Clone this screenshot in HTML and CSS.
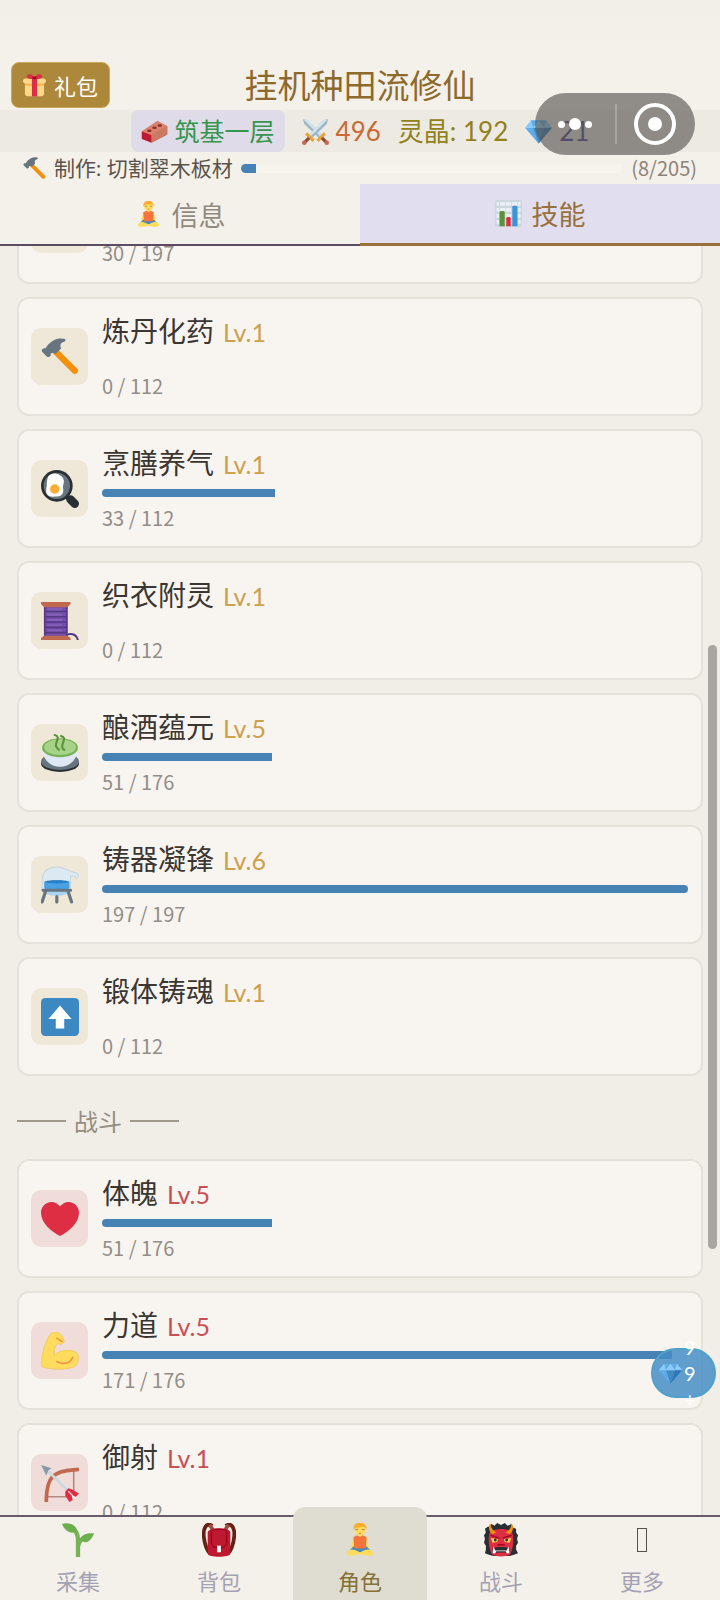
FILE: index.html
```html
<!DOCTYPE html>
<html lang="zh-CN">
<head>
    <meta charset="UTF-8">
    <meta name="viewport" content="width=device-width, initial-scale=1">
    <title>挂机种田流修仙</title>
    <link rel="stylesheet" href="styles.css">
</head>
<body>
<!-- 图标 -->
<svg class="defs" aria-hidden="true">
    <symbol id="gift" viewBox="0 0 36 36">
        <path fill="#FDD888" d="M33 31c0 2.200-1.800 4-4 4H7c-2.200 0-4-1.800-4-4V14h30v17z"/>
        <path fill="#FCAB40" d="M3 15h30v3H3z"/>
        <path fill="#FDD888" d="M36 11c0 2.200-1.800 4-4 4H4c-2.200 0-4-1.800-4-4s1.800-4 4-4h28c2.200 0 4 1.800 4 4z"/>
        <path fill="#DA2F47" d="M14 7h8v28h-8z"/>
        <path fill="#DA2F47" d="M18 8C14 8 6 8 6 4s6-5 9-2l3 4 3-4c3-3 9-2 9 2s-8 4-12 4z"/>
        <path fill="#A0041E" d="M15 4h6v4h-6z"/>
    </symbol>
    <symbol id="brick" viewBox="0 0 36 36">
        <path fill="#C1694F" d="M1 18 22 4l13 7v11L14 33z"/>
        <path fill="#D98270" d="M1 18 22 4l13 7-21 12z"/>
        <path fill="#BE1931" d="m1 18 13 5v10L1 28z"/>
        <path fill="#C97A62" d="M14 23 35 11v11L14 33z"/>
        <g fill="#8A2E2A"><ellipse cx="11" cy="17" rx="3" ry="1.800"/><ellipse cx="18" cy="13" rx="3" ry="1.800"/><ellipse cx="25" cy="10" rx="3" ry="1.800"/></g>
    </symbol>
    <symbol id="swords" viewBox="0 0 36 36">
        <g id="sword">
            <path fill="#9FB6C4" d="M1 1l7 2 20 21-4 4L3 8z"/>
            <path fill="#D5E5EF" d="M1 1l7 2 20 21-2 2z"/>
            <path fill="#E8A33A" d="m19 29 10-10 3 3-10 10z"/>
            <path fill="#8A4B38" d="m25 28 3-3 6 6-3 3z"/>
            <circle cx="33" cy="33" r="3" fill="#C1694F"/>
        </g>
        <use href="#sword" transform="matrix(-1 0 0 1 36 0)"/>
    </symbol>
    <symbol id="gem" viewBox="0 0 36 36">
        <path fill="#BDDDF4" d="M8 3h20l8 10H0z"/>
        <path fill="#5DADEC" d="M0 13h36L18 34z"/>
        <path fill="#8CCAF7" d="m0 13 8-10 5 10zM28 3l-5 10h13z"/>
        <path fill="#4289C1" d="M11 13 18 34l7-21z"/>
        <path fill="#5DADEC" d="m8 3 10 0-7 10zM18 3h10l-3 10z"/>
        <path fill="#8CCAF7" d="m18 3 7 10H11z"/>
        <path fill="#2E76B5" d="M25 13h11L18 34z"/>
    </symbol>
    <symbol id="hammer" viewBox="0 0 36 36">
        <path stroke="#F4900C" stroke-width="6" stroke-linecap="round" d="m14 13 18 18"/>
        <path fill="#66757F" d="M23 1C16-1 11 2 7 6l-3 4c-2-1-4 1-3 3l5 5c2 0 4-1 3-3l2-1 3 1 5-5c-2-5 1-6 4-7z"/>
    </symbol>
    <symbol id="yoga" viewBox="0 0 36 36">
        <path fill="#FFDC5D" d="M11 15h14l3 13-2 1-4-9h-8l-4 9-2-1zM15 11h6v5h-6z"/>
        <path fill="#4289C1" d="M11 25h14l5 5c-4 3-20 3-24 0z"/>
        <path fill="#FFDC5D" d="M4 31c4-5 8-3 14 0 6-3 10-5 14 0 1 4-5 4-9 3l-5-1-5 1c-4 1-10 1-9-3z"/>
        <path fill="#F4743B" d="M11 15l4-2c2 2 4 2 6 0l4 2-1 12H12z"/>
        <circle cx="18" cy="7" r="6" fill="#FFDC5D"/>
        <path fill="#FFAC33" d="M11 7C10-3 26-3 25 7c-1-2-3-3-4-3-3 1-8 0-10 3z"/>
        <path fill="none" stroke="#C1694F" d="M13 7h3M20 7h3M17 11h2"/>
    </symbol>
    <symbol id="chart" viewBox="0 0 36 36">
        <rect width="36" height="36" rx="3" fill="#CCD6DD"/>
        <path fill="none" stroke="#E9F1F6" stroke-width="5" d="M2 5h32M2 13h32M2 21h32M2 29h32"/>
        <path stroke="#CCD6DD" stroke-width="1" d="M6 1v34M14 1v34M22 1v34M30 1v34"/>
        <path fill="#5C913B" d="M6 16c0-2 7-2 7 0v19H6z"/>
        <path fill="#DD2E44" d="M15 24c0-2 6-2 6 0v11h-6z"/>
        <path fill="#3B94D9" d="M23 9c0-2 7-2 7 0v26h-7z"/>
    </symbol>
    <symbol id="pan" viewBox="0 0 36 36">
        <path stroke="#292F33" stroke-width="4" d="m23 24 6 6"/>
        <path stroke="#292F33" stroke-width="8" stroke-linecap="round" d="m28 28 4 4"/>
        <circle cx="15" cy="15" r="15" fill="#292F33"/>
        <circle cx="15" cy="15" r="12.500" fill="#66757F"/>
        <path fill="#fff" d="M7 6c4-5 12-2 14 2 2 4-1 6 0 10 1 5-3 8-8 7-5 1-9-1-8-7 1-5 0-8 2-12z"/>
        <circle cx="13" cy="18" r="4.500" fill="#FFAC33"/>
    </symbol>
    <symbol id="thread" viewBox="0 0 36 36">
        <path fill="none" stroke="#553986" stroke-width="2" d="M24 31c7-2 10 1 11 5"/>
        <path fill="#744EAA" d="M3 3h22v30H3z"/>
        <path stroke="#8460B8" stroke-width="2" d="M6 7h14M6 12h14M6 17h14M6 22h14M6 27h14"/>
        <path stroke="#553986" stroke-width="1.500" d="M3 9h22M3 14h22M3 19h22M3 24h22M3 29h22M3.500 4v28M24.500 4v28"/>
        <path fill="#C1694F" d="M0 0h28v2l-3 3H3L0 2zM3 32h22l3 2v2H0v-2z"/>
    </symbol>
    <symbol id="tea" viewBox="0 0 36 36">
        <ellipse cx="18" cy="28" rx="18" ry="8" fill="#292F33"/>
        <ellipse cx="18" cy="26" rx="18" ry="8" fill="#66757F"/>
        <path fill="#E1E8F5" d="M1 13h34c0 9-6 18-17 18S1 22 1 13z"/>
        <ellipse cx="18" cy="13" rx="17" ry="9" fill="#77B255"/>
        <ellipse cx="18" cy="12.500" rx="15" ry="7.500" fill="#A6D388"/>
        <path fill="none" stroke="#5C913B" stroke-width="2" stroke-linecap="round" d="M13 1c4 1 3 3 2 6s-2 5 2 8M19 2c4 1 3 3 2 6s-2 5 1 7"/>
    </symbol>
    <symbol id="alembic" viewBox="0 0 36 36">
        <path fill="#DCE9F2" stroke="#C6D5E0" d="M1 23V15C1 4 8 1 15 1c7 0 11 4 16 5 4 0 5 3 4 5l-2 1c0-3-3-3-5-2v13c-2 6-25 6-27 0z"/>
        <ellipse cx="15" cy="25" rx="10" ry="3" fill="#A9D3F2"/>
        <path fill="#4BA0E4" d="M3 15c4-2 20-2 24 0v6c-4 3-20 3-24 0z"/>
        <path fill="#2A7FC4" d="M3 15c4-2 20-2 24 0-4 2-20 2-24 0z"/>
        <path fill="none" stroke="#66757F" stroke-width="3" stroke-linecap="round" d="M2 23h26M4 25 1 34M26 25l3 9M15 29v5"/>
    </symbol>
    <symbol id="up" viewBox="0 0 36 36">
        <rect width="36" height="36" rx="4" fill="#3B88C3"/>
        <path fill="#fff" d="M18 7 29 20h-7v9h-8v-9H7z"/>
    </symbol>
    <symbol id="heart" viewBox="0 0 36 36">
        <path fill="#DD2E44" d="M36 12c0-5-4-10-10-10-3 0-6 2-8 4-2-2-5-4-8-4C4 2 0 7 0 12c0 10 10 18 18 22 8-4 18-12 18-22z"/>
    </symbol>
    <symbol id="arm" viewBox="0 0 36 36">
        <path fill="#FFDC5D" stroke="#E9BD38" stroke-width=".5" d="M15 0c3 1 6 4 7 9-2 3-4 3-6 2-3 2-4 7-3 11 4-5 14-6 20-3 4 3 3 12-2 14-5 3-22 3-30 0-2-8 3-25 8-31 2-1 4-2 6-2z"/>
        <path fill="none" stroke="#EF9645" stroke-width="1.500" stroke-linecap="round" d="M15 6c2 0 3 3 5 3M15 28c7 4 13 1 15-4"/>
    </symbol>
    <symbol id="bow" viewBox="0 0 36 36">
        <path fill="none" stroke="#B58A7C" stroke-width="1.500" d="M5 31h24M31 29V5"/>
        <path fill="none" stroke="#C1694F" stroke-width="3.500" d="M5 36c0-6 0-19 7-25S30 6 36 5"/>
        <path stroke="#CCD6DD" stroke-width="2.500" d="m5 5 23 23"/>
        <path fill="#8899A6" d="m0 1 10 3-3 2-2 5z"/>
        <path fill="#DD2E44" d="m23 26 3-3 3 1 7 4-3 3-4-1 1 4-3 2-4-6z"/>
        <path stroke="#fff" d="m26 26 7 7"/>
    </symbol>
    <symbol id="sprout" viewBox="0 0 36 36">
        <path fill="none" stroke="#77B255" stroke-width="4.500" d="M18 36V18c0-8-4-12-9-14M18 25c1-6 4-9 9-11"/>
        <path fill="#6DAF4E" d="M1 1c8-2 15 1 16 7-5 5-13 1-16-7zM35 11c-6-1-12 1-14 5 0 5 9 8 14-5z"/>
    </symbol>
    <symbol id="bag" viewBox="0 0 36 36">
        <path fill="none" stroke="#662113" stroke-width="4" d="M11 3C4-1 1 6 2 15s3 14 7 18M25 3c7-4 10 3 9 12s-3 14-7 18"/>
        <path stroke="#A0513D" stroke-width="4" d="m8 2 4 6M28 2l-4 6"/>
        <path fill="#BE1931" d="M6 10c0-6 24-6 24 0v22c0 5-24 5-24 0z"/>
        <path fill="none" stroke="#A0041E" stroke-width="1.500" d="M10 9c0-3 16-3 16 0v12c0 7-16 7-16 0z"/>
        <path fill="#BE1931" d="M8 27h20v6H8z"/>
        <path fill="#fff" d="M16 24h4v7h-4z"/>
    </symbol>
    <symbol id="ogre" viewBox="0 0 36 36">
        <path fill="#292F33" d="m5 4 3-3 3 2 3-3 4 2 4-2 3 3 4-2 2 4 3 1v4l2 3-1 4 1 4-2 3v4l2 4-5 2-4 1H10l-4-1-5-2 1-4v-4l-2-3 1-4-1-4 2-3-1-4 3-2z"/>
        <path fill="#DD2E44" d="M6 10c5-5 19-5 24 0 2 7 1 18-3 24-5 2-13 2-18 0C5 28 4 17 6 10z"/>
        <path fill="#F4900C" d="M7 0c0 6 3 8 6 10l-4 2C5 9 4 4 7 0zM29 0c0 6-3 8-6 10l4 2c4-3 5-8 2-12z"/>
        <path fill="#FFCC4D" d="m7 16 8 1-1 3-5 1zM29 16l-8 1 1 3 5 1z"/>
        <circle cx="12" cy="18" r="1.500" fill="#292F33"/><circle cx="24" cy="18" r="1.500" fill="#292F33"/>
        <path fill="none" stroke="#A0041E" stroke-width="1.500" d="m7 13 9 3M29 13l-9 3M14 23h8"/>
        <path fill="#292F33" d="M9 27c4-2 14-2 18 0v5c-4-1-14-1-18 0z"/>
        <path fill="#fff" d="m10 25 2 4h12l2-4 1 7h-3l-1-2H13l-1 2H9z"/>
    </symbol>
</svg>

<div class="app">
    <header class="header">
        <div class="title-row">
            <button class="gift-btn" type="button"><svg class="icon-sm"><use href="#gift"/></svg>礼包</button>
            <h1>挂机种田流修仙</h1>
        </div>
        <div class="status">
            <span class="realm"><svg class="icon-md"><use href="#brick"/></svg>筑基一层</span>
            <span class="stat power"><svg class="icon-md"><use href="#swords"/></svg>496</span>
            <span class="stat stone">灵晶: 192</span>
            <span class="stat jade"><svg class="icon-md"><use href="#gem"/></svg>21</span>
        </div>
        <div class="craft">
            <svg class="icon-sm"><use href="#hammer"/></svg>
            <span class="craft-name">制作: 切割翠木板材</span>
            <div class="craft-bar"><div class="fill" style="width: 3.9%"></div></div>
            <span class="craft-num">(8/205)</span>
        </div>
        <div class="capsule">
            <button class="dots" type="button" aria-label="菜单"><i></i><i class="big"></i><i></i></button>
            <button class="target" type="button" aria-label="关闭"><i></i></button>
        </div>
    </header>

    <nav class="tabs">
        <button class="tab" type="button"><svg class="icon-md"><use href="#yoga"/></svg>信息</button>
        <button class="tab active" type="button"><svg class="icon-md"><use href="#chart"/></svg>技能</button>
    </nav>

    <main class="content">
        <div class="list">
            <div class="card cut">
                <div class="tile"></div>
                <div class="info">
                    <p>30 / 197</p>
                </div>
            </div>
            <div class="card">
                <div class="tile"><svg><use href="#hammer"/></svg></div>
                <div class="info">
                    <h2>炼丹化药 <span class="lv">Lv.1</span></h2>
                    <div class="bar"></div>
                    <p>0 / 112</p>
                </div>
            </div>
            <div class="card">
                <div class="tile"><svg><use href="#pan"/></svg></div>
                <div class="info">
                    <h2>烹膳养气 <span class="lv">Lv.1</span></h2>
                    <div class="bar"><div class="fill" style="width: 29.5%"></div></div>
                    <p>33 / 112</p>
                </div>
            </div>
            <div class="card">
                <div class="tile"><svg><use href="#thread"/></svg></div>
                <div class="info">
                    <h2>织衣附灵 <span class="lv">Lv.1</span></h2>
                    <div class="bar"></div>
                    <p>0 / 112</p>
                </div>
            </div>
            <div class="card">
                <div class="tile"><svg><use href="#tea"/></svg></div>
                <div class="info">
                    <h2>酿酒蕴元 <span class="lv">Lv.5</span></h2>
                    <div class="bar"><div class="fill" style="width: 29%"></div></div>
                    <p>51 / 176</p>
                </div>
            </div>
            <div class="card">
                <div class="tile"><svg><use href="#alembic"/></svg></div>
                <div class="info">
                    <h2>铸器凝锋 <span class="lv">Lv.6</span></h2>
                    <div class="bar"><div class="fill" style="width: 100%"></div></div>
                    <p>197 / 197</p>
                </div>
            </div>
            <div class="card">
                <div class="tile"><svg><use href="#up"/></svg></div>
                <div class="info">
                    <h2>锻体铸魂 <span class="lv">Lv.1</span></h2>
                    <div class="bar"></div>
                    <p>0 / 112</p>
                </div>
            </div>

            <div class="group">战斗</div>

            <div class="card fight">
                <div class="tile"><svg><use href="#heart"/></svg></div>
                <div class="info">
                    <h2>体魄 <span class="lv">Lv.5</span></h2>
                    <div class="bar"><div class="fill" style="width: 29%"></div></div>
                    <p>51 / 176</p>
                </div>
            </div>
            <div class="card fight">
                <div class="tile"><svg><use href="#arm"/></svg></div>
                <div class="info">
                    <h2>力道 <span class="lv">Lv.5</span></h2>
                    <div class="bar"><div class="fill" style="width: 97.2%"></div></div>
                    <p>171 / 176</p>
                </div>
            </div>
            <div class="card fight">
                <div class="tile"><svg><use href="#bow"/></svg></div>
                <div class="info">
                    <h2>御射 <span class="lv">Lv.1</span></h2>
                    <div class="bar"></div>
                    <p>0 / 112</p>
                </div>
            </div>
        </div>
        <div class="scrollbar"></div>
        <button class="float-gem" type="button"><svg class="icon-sm"><use href="#gem"/></svg><span>9<br>9<br>+</span></button>
    </main>

    <nav class="bottom">
        <a href="#"><svg><use href="#sprout"/></svg>采集</a>
        <a href="#"><svg><use href="#bag"/></svg>背包</a>
        <a href="#" class="active"><svg><use href="#yoga"/></svg>角色</a>
        <a href="#"><svg><use href="#ogre"/></svg>战斗</a>
        <a href="#"><i class="blank"></i>更多</a>
    </nav>
</div>
</body>
</html>
```
FILE: styles.css
```css
* {
    box-sizing: border-box;
    margin: 0;
    padding: 0;
}

body {
    background: #f1eee7;
    color: #3b3632;
    font-family: Lato, "Noto Sans CJK SC", sans-serif;
}

button {
    border: none;
    background: none;
    font: inherit;
}

.defs {
    position: absolute;
    width: 0;
    height: 0;
}

.icon-sm {
    width: 23px;
    height: 23px;
    flex: none;
}

.icon-md {
    width: 27px;
    height: 27px;
    flex: none;
}

.app {
    display: flex;
    flex-direction: column;
    height: 100vh;
}

/* 顶部 */
.header {
    position: relative;
    padding-top: 60px;
    background: linear-gradient(#f2efe8, #f4f1ea 60px);
}

.title-row {
    display: grid;
    grid-template-columns: 1fr auto 1fr;
    align-items: center;
    padding: 0 11px;
    height: 50px;
}

.gift-btn {
    display: flex;
    align-items: center;
    justify-content: center;
    justify-self: start;
    gap: 8px;
    width: 99px;
    height: 46px;
    border: 1px solid #c9a85a;
    border-radius: 8px;
    background: #ad883b;
    color: #fff;
    font-size: 22px;
}

h1 {
    color: #8d6a2c;
    font-size: 33px;
    font-weight: 400;
    line-height: 46px;
}

.status {
    display: flex;
    align-items: center;
    justify-content: center;
    height: 42px;
    gap: 17px;
    background: #edeae3;
    font-size: 25px;
    line-height: 42px;
}

.realm,
.stat {
    display: flex;
    align-items: center;
    gap: 7px;
}

.realm {
    padding: 0 10px;
    border-radius: 8px;
    background: #e0dbe8;
    color: #35964d;
}

.stat {
    font-size: 26px;
}

.power {
    color: #cb6a33;
}

.stone {
    color: #928019;
}

.jade {
    color: #4b3a90;
}

.craft {
    display: flex;
    align-items: center;
    height: 32px;
    padding: 0 23px;
    gap: 8px;
    font-size: 21px;
    line-height: 30px;
    color: #5b534b;
}

.craft-bar {
    flex: 1;
    height: 9px;
    border-radius: 5px;
    overflow: hidden;
    background: #f7f4ee;
}

.craft-num {
    color: #8d8378;
    font-family: "Noto Sans CJK SC", sans-serif;
    font-size: 20px;
}

.fill {
    height: 100%;
    background: #4682b4;
}

.capsule {
    position: absolute;
    top: 93px;
    right: 25px;
    display: flex;
    width: 160px;
    height: 62px;
    border-radius: 31px;
    background: rgba(90, 88, 84, .65);
}

.capsule button {
    flex: 1;
    display: flex;
    align-items: center;
    justify-content: center;
    gap: 4px;
}

.capsule i {
    width: 7px;
    height: 7px;
    border-radius: 50%;
    background: #fff;
}

.capsule .big {
    width: 12px;
    height: 12px;
}

.capsule .target::before {
    content: "";
    position: absolute;
    width: 34px;
    height: 34px;
    border: 4px solid #fff;
    border-radius: 50%;
}

.capsule .target i {
    width: 14px;
    height: 14px;
}

.capsule::after {
    content: "";
    position: absolute;
    left: 50%;
    top: 11px;
    width: 2px;
    height: 40px;
    background: #a8a6a2;
}

/* 标签页 */
.tabs {
    display: flex;
    background: #f4f1ea;
}

.tab {
    flex: 1;
    display: flex;
    align-items: center;
    justify-content: center;
    gap: 10px;
    height: 62px;
    border-bottom: 2px solid #5a4c62;
    color: #92897f;
    font-size: 27px;
}

.tab.active {
    border-bottom: 3px solid #987038;
    background: #e1deef;
    color: #98713c;
}

/* 技能列表 */
.content {
    position: relative;
    flex: 1;
    min-height: 0;
}

.list {
    display: flex;
    flex-direction: column;
    justify-content: flex-end;
    gap: 13px;
    height: 100%;
    padding: 0 17px;
    overflow: hidden;
}

.card {
    display: flex;
    align-items: center;
    flex: none;
    gap: 14px;
    height: 119px;
    padding: 14px 13px 14px 12px;
    border: 2px solid #e5e2dc;
    border-radius: 12px;
    background: #f8f5f0;
}

.card:last-child {
    margin-bottom: -27px;
}

.cut .info {
    align-self: flex-end;
}

.tile {
    display: flex;
    align-items: center;
    justify-content: center;
    flex: none;
    width: 57px;
    height: 57px;
    border-radius: 10px;
    background: #efe8d8;
}

.tile svg {
    width: 38px;
    height: 38px;
}

.info {
    flex: 1;
}

h2 {
    display: flex;
    align-items: baseline;
    gap: 9px;
    height: 38px;
    font-size: 28px;
    font-weight: 400;
    line-height: 38px;
}

.lv {
    color: #cda04c;
    font-size: 25px;
}

.bar {
    height: 8px;
    margin: 7px 0 5px;
    border-radius: 4px;
    overflow: hidden;
}

.info p {
    color: #928d88;
    font-family: "Noto Sans CJK SC", sans-serif;
    font-size: 20px;
    line-height: 31px;
}

.fight .tile {
    background: #f0dcd8;
}

.fight .lv {
    color: #c94f57;
}

.group {
    display: flex;
    align-items: center;
    flex: none;
    gap: 8px;
    height: 57px;
    padding-top: 6px;
    color: #948e82;
    font-size: 24px;
}

.group::before,
.group::after {
    content: "";
    width: 49px;
    height: 2px;
    background: #9f998c;
}

.scrollbar {
    position: absolute;
    right: 3px;
    top: 399px;
    width: 9px;
    height: 604px;
    border-radius: 5px;
    background: #a9a6a1;
}

.float-gem {
    position: absolute;
    right: 4px;
    bottom: 117px;
    display: flex;
    align-items: center;
    gap: 2px;
    width: 65px;
    height: 50px;
    padding-left: 6px;
    border: 2px solid #4fa0ca;
    border-radius: 25px;
    background: rgba(70, 142, 196, .85);
    color: #fff;
    font-size: 20px;
    line-height: 26px;
}

/* 底部导航 */
.bottom {
    display: grid;
    grid-template-columns: repeat(5, 1fr);
    grid-template-rows: 100%;
    align-items: end;
    gap: 7px;
    height: 85px;
    padding: 0 11px;
    border-top: 2px solid #675c6b;
    background: #f4f1ea;
    z-index: 1;
}

.bottom a {
    display: flex;
    flex-direction: column;
    align-items: center;
    gap: 8px;
    height: 93px;
    padding-top: 16px;
    border-radius: 12px 12px 0 0;
    color: #a5a1b4;
    font-size: 22px;
    line-height: 34px;
    text-decoration: none;
}

.bottom a.active {
    background: #dfdcd1;
    color: #857035;
}

.bottom svg {
    width: 34px;
    height: 34px;
}

.blank {
    width: 10px;
    height: 24px;
    margin: 5px 0;
    border: 1px solid #55504c;
}
```
